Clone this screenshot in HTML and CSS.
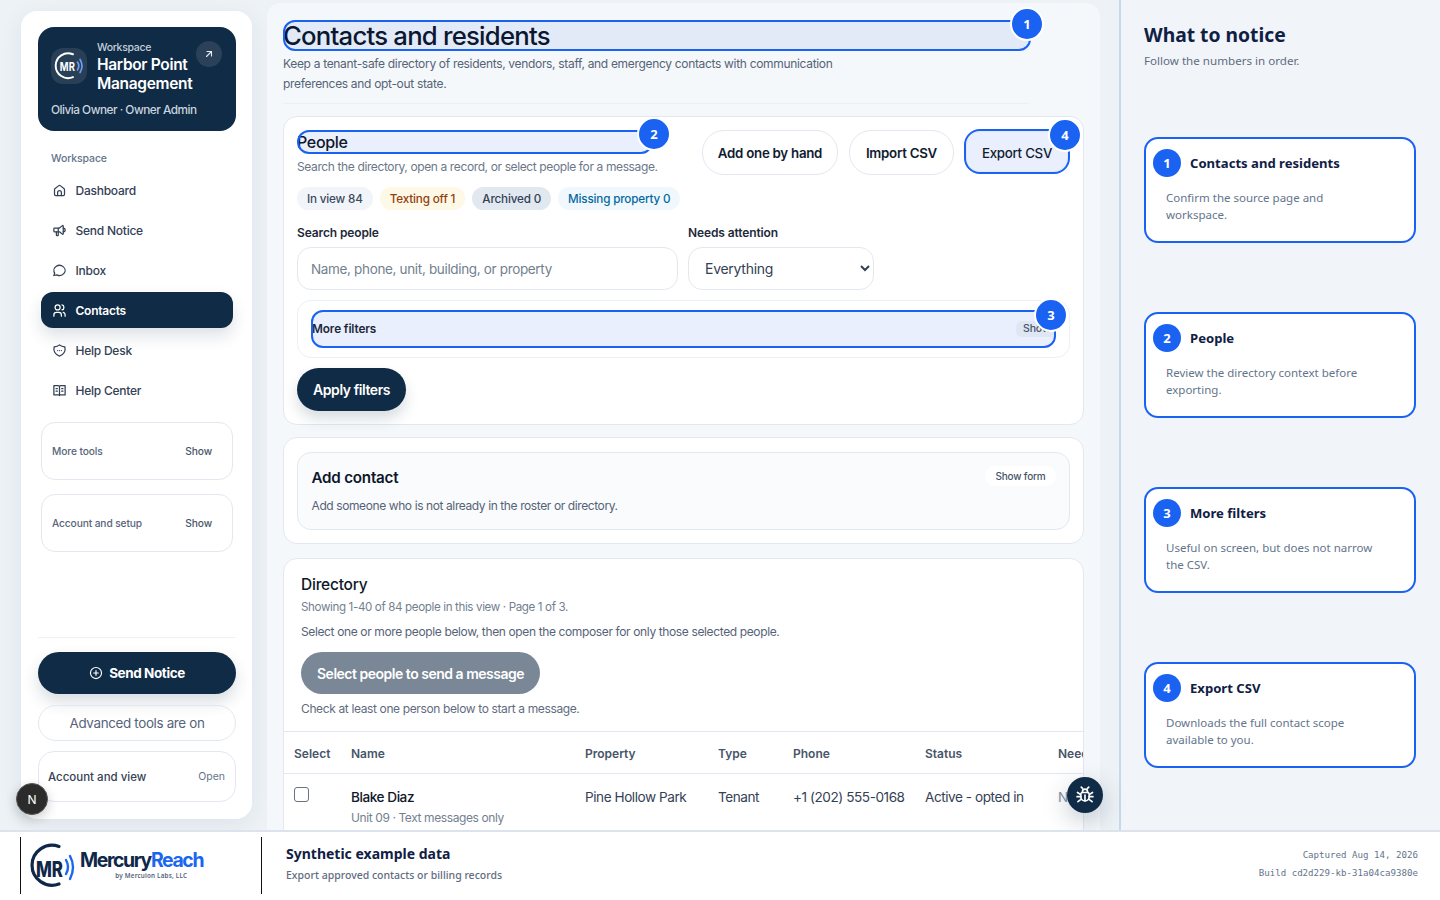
FILE: index.html
```html
<!DOCTYPE html>
<html lang="en">
<head>
  <meta charset="UTF-8" />
  <title>Contacts and residents</title>
  <link rel="stylesheet" href="styles.css">
</head>
<body>
  <div class="app">
    <div class="stage">
      <aside class="sidebar">
        <div class="ws-card">
          <div class="ws-top">
            <div class="ws-logo">
              <svg width="30" height="30" viewBox="0 0 46 46" fill="none">
                <path d="M29 5A19 19 0 1 0 29 40" stroke="#fff" stroke-width="3" stroke-linecap="round"/>
                <text x="9" y="30" class="mark-text" fill="#fff" textLength="23" lengthAdjust="spacingAndGlyphs">MR</text>
                <path d="M36 17Q40 23 36 29M40 13Q46 23 40 33" stroke="#6d9cf2" stroke-width="2.600" stroke-linecap="round"/>
              </svg>
            </div>
            <div class="ws-text">
              <span class="ws-label">Workspace</span>
              <strong class="ws-name">Harbor Point Management</strong>
            </div>
            <span class="ws-open">
              <svg width="12" height="12" viewBox="0 0 24 24" fill="none" stroke="#e6edf3" stroke-width="2.200" stroke-linecap="round" stroke-linejoin="round"><path d="M7 17 17 7M8 7h9v9"/></svg>
            </span>
          </div>
          <p class="ws-user">Olivia Owner · Owner Admin</p>
        </div>

        <p class="nav-label">Workspace</p>
        <nav class="nav">
          <a href="#">
            <svg viewBox="0 0 24 24"><path d="M19 8.700 13.700 4.600a2.700 2.700 0 0 0-3.300 0L5 8.700a2.700 2.700 0 0 0-1 2.100V18a2 2 0 0 0 2 2h12a2 2 0 0 0 2-2v-7.200c0-.8-.4-1.600-1-2.100"/><path d="M9 20v-5a3 3 0 0 1 6 0v5"/></svg>
            Dashboard
          </a>
          <a href="#">
            <svg viewBox="0 0 24 24"><path d="M18 8a3 3 0 0 1 0 6"/><path d="M10 8v11a1 1 0 0 1-1 1H8a1 1 0 0 1-1-1v-5"/><path d="m12 8 4.500-3.800a.9.9 0 0 1 1.500.7v12.200a.9.9 0 0 1-1.500.7L12 14H4a1 1 0 0 1-1-1V9a1 1 0 0 1 1-1z"/></svg>
            Send Notice
          </a>
          <a href="#">
            <svg viewBox="0 0 24 24"><path d="m3 20 1.300-3.900C2 12.700 2.900 8.200 6.400 5.700c3.500-2.500 8.600-2.300 11.800.5 3.300 2.800 3.700 7.300 1 10.500-2.700 3.200-7.600 4.200-11.500 2.300z"/></svg>
            Inbox
          </a>
          <a href="#" class="active">
            <svg viewBox="0 0 24 24"><circle cx="9" cy="7" r="4"/><path d="M3 21v-2a4 4 0 0 1 4-4h4a4 4 0 0 1 4 4v2"/><path d="M16 3.100a4 4 0 0 1 0 7.800M21 21v-2a4 4 0 0 0-3-3.900"/></svg>
            Contacts
          </a>
          <a href="#">
            <svg viewBox="0 0 24 24"><path d="M12 3a12 12 0 0 0 8.500 3A12 12 0 0 1 12 21 12 12 0 0 1 3.500 6 12 12 0 0 0 12 3z"/><path d="M9 12h.01M12 12h.01M15 12h.01"/></svg>
            Help Desk
          </a>
          <a href="#">
            <svg viewBox="0 0 24 24"><path d="M12 6v14M3 4h7a2 2 0 0 1 2 2 2 2 0 0 1 2-2h7v15h-7a2 2 0 0 0-2 1 2 2 0 0 0-2-1H3z"/><path d="M6.500 9h2M6.500 13h2M15.500 9h2M15.500 13h2"/></svg>
            Help Center
          </a>
        </nav>

        <div class="side-box"><span>More tools</span><em>Show</em></div>
        <div class="side-box"><span>Account and setup</span><em>Show</em></div>

        <div class="side-foot">
          <button class="send-btn">
            <svg width="14" height="14" viewBox="0 0 24 24" fill="none" stroke="#fff" stroke-width="2" stroke-linecap="round"><circle cx="12" cy="12" r="9.500"/><path d="M12 8v8M8 12h8"/></svg>
            Send Notice
          </button>
          <div class="adv-pill">Advanced tools are on</div>
          <div class="acct-box"><span>Account and view</span><em>Open</em></div>
        </div>
      </aside>

      <main class="content">
        <header class="page-head">
          <h1 class="tour-mark tour-h1">Contacts and residents<span class="badge">1</span></h1>
          <p>Keep a tenant-safe directory of residents, vendors, staff, and emergency contacts with communication preferences and opt-out state.</p>
        </header>

        <section class="card people">
          <div class="people-top">
            <div class="people-intro">
              <h2 class="tour-mark tour-h2">People<span class="badge">2</span></h2>
              <p>Search the directory, open a record, or select people for a message.</p>
            </div>
            <div class="actions">
              <button class="pill-btn add-btn">Add one by hand</button>
              <button class="pill-btn import-btn">Import CSV</button>
              <button class="pill-btn tour-export">Export CSV<span class="badge">4</span></button>
            </div>
          </div>
          <div class="chips">
            <span class="chip">In view 84</span>
            <span class="chip warn">Texting off 1</span>
            <span class="chip gray">Archived 0</span>
            <span class="chip info">Missing property 0</span>
          </div>
          <div class="filters">
            <label class="field wide">
              <span>Search people</span>
              <input type="text" placeholder="Name, phone, unit, building, or property">
            </label>
            <label class="field narrow">
              <span>Needs attention</span>
              <select><option>Everything</option></select>
            </label>
          </div>
          <div class="more-wrap">
            <div class="tour-mark more-filters">More filters<em>Show</em><span class="badge">3</span></div>
          </div>
          <button class="apply-btn">Apply filters</button>
        </section>

        <section class="card add-card">
          <div class="add-inner">
            <div>
              <h3>Add contact</h3>
              <p>Add someone who is not already in the roster or directory.</p>
            </div>
            <em>Show form</em>
          </div>
        </section>

        <section class="card directory">
          <div class="dir-head">
            <h3>Directory</h3>
            <p class="dir-count">Showing 1-40 of 84 people in this view · Page 1 of 3.</p>
            <p class="dir-help">Select one or more people below, then open the composer for only those selected people.</p>
            <button class="msg-btn">Select people to send a message</button>
            <p class="dir-hint">Check at least one person below to start a message.</p>
          </div>
          <table class="dir-table">
            <thead>
              <tr><th class="c-sel">Select</th><th class="c-name">Name</th><th class="c-prop">Property</th><th class="c-type">Type</th><th class="c-phone">Phone</th><th class="c-status">Status</th><th>Needs attention</th></tr>
            </thead>
            <tbody>
              <tr>
                <td><span class="check"></span></td>
                <td><strong>Blake Diaz</strong><small>Unit 09 · Text messages only</small></td>
                <td>Pine Hollow Park</td>
                <td>Tenant</td>
                <td>+1 (202) 555-0168</td>
                <td>Active - opted in</td>
                <td class="muted">None</td>
              </tr>
            </tbody>
          </table>
        </section>
      </main>

      <aside class="notes">
        <h2>What to notice</h2>
        <p class="notes-sub">Follow the numbers in order.</p>
        <ol class="note-list">
          <li><div class="note-title"><span>1</span>Contacts and residents</div><p>Confirm the source page and workspace.</p></li>
          <li><div class="note-title"><span>2</span>People</div><p>Review the directory context before exporting.</p></li>
          <li><div class="note-title"><span>3</span>More filters</div><p>Useful on screen, but does not narrow the CSV.</p></li>
          <li><div class="note-title"><span>4</span>Export CSV</div><p>Downloads the full contact scope available to you.</p></li>
        </ol>
      </aside>

      <span class="float-n">N</span>
      <span class="float-bug">
        <svg width="20" height="20" viewBox="0 0 24 24" fill="none" stroke="#fff" stroke-width="2" stroke-linecap="round" stroke-linejoin="round"><path d="M9 9V8a3 3 0 0 1 6 0v1"/><path d="M8 9h8a3 3 0 0 1 1 2v3a5 5 0 0 1-10 0v-3a3 3 0 0 1 1-2z"/><path d="M3 9l3 2M21 9l-3 2M2.500 14H7M21.500 14H17M3.500 20l4-3M20.500 20l-4-3M12 12v7M9 4 7.500 2.500M15 4l1.500-1.500"/></svg>
      </span>
    </div>

    <footer class="foot">
      <div class="foot-logo">
        <svg width="46" height="46" viewBox="0 0 46 46" fill="none">
          <path d="M29 3.500A20 20 0 1 0 29 41" stroke="#0f2748" stroke-width="3.200" stroke-linecap="round"/>
          <text x="6" y="33.500" class="foot-mark" fill="#0f2748" textLength="27" lengthAdjust="spacingAndGlyphs">MR</text>
          <path d="M36 17Q40 24 36 31" stroke="#1a66f0" stroke-width="2.400" stroke-linecap="round"/>
          <path d="M40 13Q46 24 40 36" stroke="#1a66f0" stroke-width="2.400" stroke-linecap="round"/>
        </svg>
        <div class="word">
          <div class="wordmark">Mercury<b>Reach</b></div>
          <div class="byline">by Mercuion Labs, LLC</div>
        </div>
      </div>
      <div class="foot-text">
        <strong>Synthetic example data</strong>
        <span>Export approved contacts or billing records</span>
      </div>
      <div class="foot-meta">
        <span>Captured Aug 14, 2026</span>
        <span>Build cd2d229-kb-31a04ca9380e</span>
      </div>
    </footer>
  </div>
</body>
</html>
```

FILE: styles.css
```css
:root {
  --navy: #0f2b46;
  --blue: #1a62f2;
  --line: #e3e8f0;
  --ink: #0f172a;
  --slate: #334155;
  --muted: #64748b;
}

* {
  box-sizing: border-box;
}

html, body {
  margin: 0;
  height: 100%;
  overflow: hidden;
}

body {
  font-family: Inter, 'Noto Sans', sans-serif;
  color: var(--ink);
  background: #edf2f6;
}

p, h1, h2, h3, ol {
  margin: 0;
  padding: 0;
}

em {
  font-style: normal;
}

button {
  font-family: inherit;
  border: none;
}

.app {
  height: 900px;
  display: flex;
  flex-direction: column;
}

.stage {
  position: relative;
  height: 830px;
  display: flex;
  overflow: hidden;
  padding-left: 21px;
}

/* Sidebar */
.sidebar {
  width: 231px;
  height: 808px;
  margin-top: 11px;
  flex-shrink: 0;
  background: #fff;
  border-radius: 16px;
  padding: 16px 16px 17px 17px;
  display: flex;
  flex-direction: column;
  box-shadow: 0 6px 24px rgba(15, 43, 70, 0.07);
}

.ws-card {
  height: 104px;
  background: var(--navy);
  border-radius: 16px;
  padding: 13px 14px 0 13px;
  color: #fff;
}

.ws-top {
  display: flex;
  align-items: flex-start;
}

.ws-logo {
  width: 36px;
  height: 36px;
  margin-top: 8px;
  margin-right: 10px;
  flex-shrink: 0;
  border-radius: 12px;
  background: #293f56;
  display: flex;
  align-items: center;
  justify-content: center;
}

.mark-text {
  font: 700 18px Inter, sans-serif;
}

.ws-text {
  width: 100px;
  flex-shrink: 0;
  letter-spacing: -0.02em;
}

.ws-label {
  display: block;
  margin-top: 1px;
  font-size: 10.500px;
  line-height: 14px;
  font-weight: 500;
  color: #c3ced9;
}

.ws-name {
  display: block;
  font-size: 15.500px;
  line-height: 19px;
  font-weight: 600;
}

.ws-open {
  width: 26px;
  height: 26px;
  margin: 1px 0 0 -1px;
  flex-shrink: 0;
  border-radius: 50%;
  background: #2b4159;
  display: flex;
  align-items: center;
  justify-content: center;
}

.ws-user {
  margin-top: 9px;
  font-size: 11.800px;
  line-height: 16px;
  font-weight: 500;
  letter-spacing: -0.5px;
  color: #c9d4de;
}

.nav-label {
  margin: 21px 0 0 13px;
  font-size: 10.500px;
  line-height: 14px;
  font-weight: 500;
  letter-spacing: -0.01em;
  color: #64748b;
}

.nav {
  margin: 6px 0 0 3px;
  width: 192px;
  display: flex;
  flex-direction: column;
  gap: 4px;
}

.nav a {
  height: 36px;
  padding-left: 11px;
  display: flex;
  align-items: center;
  gap: 8.500px;
  border-radius: 12px;
  text-decoration: none;
  font-size: 12px;
  font-weight: 500;
  letter-spacing: -0.02em;
  color: var(--slate);
}

.nav svg {
  width: 15px;
  height: 15px;
  fill: none;
  stroke: currentColor;
  stroke-width: 2;
  stroke-linecap: round;
  stroke-linejoin: round;
}

.nav a.active {
  background: var(--navy);
  color: #fff;
  font-weight: 600;
  box-shadow: 0 8px 16px rgba(15, 43, 70, 0.14);
}

.side-box {
  width: 192px;
  height: 58px;
  margin: 14px 0 0 3px;
  padding: 0 10px;
  display: flex;
  align-items: center;
  justify-content: space-between;
  background: #fff;
  border: 1px solid var(--line);
  border-radius: 14px;
  font-size: 10.200px;
  font-weight: 500;
  letter-spacing: -0.01em;
  color: #56657a;
}

.side-box em {
  padding: 3px 10px;
  color: #475569;
}

.side-foot {
  margin-top: auto;
  padding-top: 14px;
  border-top: 1px solid #eef1f5;
}

.send-btn {
  width: 198px;
  height: 42px;
  display: flex;
  align-items: center;
  justify-content: center;
  gap: 6px;
  background: var(--navy);
  color: #fff;
  border-radius: 21px;
  font-size: 13.500px;
  font-weight: 700;
  letter-spacing: -0.03em;
  box-shadow: 0 8px 16px rgba(15, 43, 70, 0.16);
}

.adv-pill {
  height: 36px;
  margin-top: 11px;
  border: 1px solid var(--line);
  border-radius: 18px;
  display: flex;
  align-items: center;
  justify-content: center;
  font-size: 13.400px;
  letter-spacing: -0.025em;
  color: #55647a;
}

.acct-box {
  height: 51px;
  margin-top: 10px;
  padding: 0 10px 0 9px;
  border: 1px solid var(--line);
  border-radius: 16px;
  display: flex;
  align-items: center;
  justify-content: space-between;
  font-size: 11.500px;
  font-weight: 500;
  color: #334155;
}

.acct-box em {
  font-size: 10.500px;
  font-weight: 400;
  color: #64748b;
}

/* Main panel */
.content {
  width: 833px;
  margin: 3px 0 0 15px;
  flex-shrink: 0;
  padding: 17px 16px 0;
  background: #f5f8fa;
  border-radius: 14px 14px 0 0;
}

.page-head {
  width: 746px;
  height: 84px;
  border-bottom: 1px solid #eceff3;
}

.page-head p {
  width: 560px;
  margin-top: 3px;
  font-size: 12px;
  line-height: 20px;
  letter-spacing: -0.32px;
  color: #566377;
}

/* drawn inside the box, so the text runs over the left edge */
.tour-mark {
  position: relative;
  border-radius: 12px;
  outline: 2px solid var(--blue);
  outline-offset: -2px;
}

.tour-h1 {
  width: 748px;
  height: 31px;
  background: #e1eaf6;
  font-size: 25.700px;
  line-height: 31px;
  font-weight: 500;
  letter-spacing: -0.03em;
  color: #0b1730;
}

.badge {
  position: absolute;
  width: 34px;
  height: 34px;
  border: 2px solid #fff;
  border-radius: 50%;
  background: var(--blue);
  display: flex;
  align-items: center;
  justify-content: center;
  font: 700 13px 'Noto Sans', sans-serif;
  letter-spacing: 0;
  color: #fff;
}

.tour-h1 .badge {
  right: -13px;
  top: -13px;
}

.card {
  background: #fff;
  border: 1px solid var(--line);
  border-radius: 14px;
}

.people {
  height: 309px;
  margin-top: 12px;
  padding: 13px 13px 0;
}

.people-top {
  display: flex;
  justify-content: space-between;
}

.people-intro {
  width: 356px;
}

.tour-h2 {
  height: 24px;
  background: #e9effc;
  font-size: 16px;
  line-height: 24px;
  font-weight: 500;
  letter-spacing: -0.02em;
}

.tour-h2 .badge {
  right: -18px;
  top: -13px;
}

.people-intro p {
  margin-top: 4px;
  font-size: 12px;
  line-height: 18px;
  letter-spacing: -0.38px;
  white-space: nowrap;
  color: #6b7789;
}

.actions {
  display: flex;
  gap: 11px;
}

.pill-btn {
  position: relative;
  height: 45px;
  padding: 0;
  background: #fff;
  border: 1px solid var(--line);
  border-radius: 22px;
  font-size: 13.300px;
  font-weight: 600;
  letter-spacing: -0.02em;
  color: #111c30;
}

.add-btn {
  width: 136px;
}

.import-btn {
  width: 105px;
}

.tour-export {
  width: 102px;
  height: 41px;
  margin: 1px 2px 0 1px;
  padding: 2px 0 0;
  background: #e9effc;
  border-radius: 14px;
  outline: 2px solid var(--blue);
  font-weight: 500;
}

.tour-export .badge {
  right: -15px;
  top: -14px;
}

.chips {
  margin-top: 11px;
  display: flex;
  gap: 7px;
}

.chip {
  height: 23px;
  padding: 0 10px;
  display: flex;
  align-items: center;
  border-radius: 12px;
  background: #f1f5f9;
  font-size: 11.700px;
  font-weight: 500;
  letter-spacing: -0.015em;
  color: #3b485c;
}

.chip.warn {
  background: #fef8e7;
  color: #92400e;
}

.chip.gray {
  background: #e2e8f0;
  color: #334155;
}

.chip.info {
  background: #f0f8fe;
  color: #0369a1;
}

.filters {
  margin-top: 15px;
  display: flex;
  gap: 10px;
}

.field span {
  display: block;
  margin-bottom: 6px;
  font-size: 12px;
  line-height: 16px;
  font-weight: 600;
  letter-spacing: -0.01em;
  color: #1e293b;
}

.field input,
.field select {
  display: block;
  width: 100%;
  height: 43px;
  background: #fff;
  border: 1px solid var(--line);
  border-radius: 14px;
  font-family: inherit;
  font-size: 14px;
  letter-spacing: -0.02em;
  color: #334155;
}

.field input {
  padding: 0 13px;
  font-size: 13.500px;
  letter-spacing: -0.34px;
}

.field select {
  padding: 0 12px;
}

.field input::placeholder {
  color: #737f90;
}

.wide {
  width: 381px;
}

.narrow {
  width: 186px;
}

.more-wrap {
  height: 58px;
  margin-top: 10px;
  padding: 9px 13px 0;
  border: 1px solid #edf0f5;
  border-radius: 14px;
}

.more-filters {
  height: 38px;
  display: flex;
  align-items: center;
  justify-content: space-between;
  padding-left: 1px;
  background: #e9effc;
  font-size: 11.800px;
  font-weight: 600;
  letter-spacing: -0.01em;
  color: #1e293b;
}

.more-filters em {
  width: 40px;
  height: 16px;
  padding: 0 7px;
  border-radius: 6px 0 0 6px;
  background: #dfe6f4;
  font-size: 10.500px;
  line-height: 16px;
  font-weight: 500;
  overflow: hidden;
  color: #475569;
}

.more-filters .badge {
  right: -12px;
  top: -12px;
}

.apply-btn {
  height: 43px;
  margin-top: 10px;
  padding: 0 16px;
  background: var(--navy);
  color: #fff;
  border-radius: 22px;
  font-size: 14px;
  font-weight: 600;
  letter-spacing: -0.03em;
  box-shadow: 0 8px 14px rgba(15, 43, 70, 0.16);
}

.add-card {
  height: 107px;
  margin-top: 12px;
  padding: 14px 13px 0;
}

.add-inner {
  height: 78px;
  padding: 14px 13px 0 13.500px;
  display: flex;
  justify-content: space-between;
  background: #fafbfd;
  border: 1px solid var(--line);
  border-radius: 14px;
}

.add-inner h3 {
  font-size: 15.200px;
  line-height: 22px;
  font-weight: 600;
  letter-spacing: -0.015em;
}

.add-inner p {
  margin-top: 9px;
  font-size: 12px;
  line-height: 16px;
  letter-spacing: -0.4px;
  color: #566377;
}

.add-inner em {
  width: 71px;
  height: 20px;
  margin-top: -1px;
  text-align: center;
  line-height: 20px;
  border-radius: 10px;
  background: #fff;
  font-size: 10px;
  font-weight: 500;
  letter-spacing: -0.02em;
  color: #475569;
}

.directory {
  height: 300px;
  margin-top: 14px;
  overflow: hidden;
}

.dir-head {
  padding: 15px 17px 0;
}

.dir-head h3 {
  font-size: 15.500px;
  line-height: 22px;
  font-weight: 500;
  letter-spacing: -0.015em;
}

.dir-count,
.dir-help,
.dir-hint {
  font-size: 12px;
  line-height: 16px;
  letter-spacing: -0.37px;
}

.dir-count {
  margin-top: 3px;
  font-size: 11.600px;
  color: #737f90;
}

.dir-help {
  margin-top: 9px;
  color: #566377;
}

.msg-btn {
  display: block;
  height: 42px;
  margin-top: 12px;
  padding: 0 16px;
  background: #7a8796;
  color: #fff;
  border-radius: 21px;
  font-size: 14px;
  font-weight: 600;
  letter-spacing: -0.035em;
}

.dir-hint {
  margin-top: 7px;
  color: #5f6c7f;
}

.dir-table {
  width: 900px;
  margin-top: 14px;
  border-collapse: collapse;
  table-layout: fixed;
  border-top: 1px solid var(--line);
}

.dir-table th {
  height: 42px;
  padding: 1px 0 0;
  text-align: left;
  font-size: 12px;
  font-weight: 600;
  white-space: nowrap;
  color: #475569;
  border-bottom: 1px solid var(--line);
}

.dir-table td {
  padding: 13px 0 0;
  vertical-align: top;
  font-size: 13.600px;
  line-height: 20px;
  letter-spacing: -0.45px;
  white-space: nowrap;
  color: #334155;
}

.dir-table th:first-child,
.dir-table td:first-child {
  padding-left: 10px;
}

.dir-table strong {
  display: block;
  font-weight: 500;
  color: var(--ink);
}

.dir-table small {
  display: block;
  margin-top: 2px;
  font-size: 12px;
  line-height: 18px;
  letter-spacing: -0.4px;
  color: #737f90;
}

.c-sel { width: 67px; }
.c-name { width: 234px; }
.c-prop { width: 133px; }
.c-type { width: 75px; }
.c-phone { width: 132px; }
.c-status { width: 133px; }

.muted {
  color: #8391a3 !important;
}

.check {
  display: block;
  width: 15px;
  height: 15px;
  border: 1px solid #6b7280;
  border-radius: 3px;
  background: #fff;
}

/* Right column */
.notes {
  width: 321px;
  margin-left: 19px;
  flex-shrink: 0;
  padding: 21px 24px 0 23px;
  background: #f1f5fa;
  border-left: 2px solid #c9d8e8;
  font-family: 'Noto Sans', sans-serif;
}

.notes h2 {
  font-size: 19.300px;
  line-height: 27px;
  font-weight: 700;
  color: #0f2044;
}

.notes-sub {
  margin-top: 5px;
  font-size: 11.600px;
  line-height: 16px;
  color: #5f6c80;
}

.note-list {
  margin-top: 68px;
  list-style: none;
  display: flex;
  flex-direction: column;
  gap: 69px;
}

.note-list li {
  height: 106px;
  padding: 10px 12px 0 7px;
  background: #fff;
  border: 2px solid var(--blue);
  border-radius: 14px;
}

.note-title {
  display: flex;
  align-items: center;
  gap: 9px;
  font-size: 13.100px;
  font-weight: 700;
  color: #0f2044;
}

.note-title span {
  width: 28px;
  height: 28px;
  border-radius: 50%;
  background: var(--blue);
  display: flex;
  align-items: center;
  justify-content: center;
  font-size: 13px;
  color: #fff;
}

.note-list p {
  max-width: 215px;
  margin: 12px 0 0 13px;
  font-size: 11.500px;
  line-height: 17px;
  color: #64748b;
}

/* Floating buttons */
.float-n {
  position: absolute;
  left: 16px;
  top: 783px;
  width: 32px;
  height: 32px;
  border: 1px solid #555;
  border-radius: 50%;
  background: #2b2b2b;
  display: flex;
  align-items: center;
  justify-content: center;
  font-size: 12px;
  color: #fff;
  box-shadow: 0 4px 12px rgba(0, 0, 0, 0.2);
}

.float-bug {
  position: absolute;
  left: 1067px;
  top: 777px;
  width: 36px;
  height: 36px;
  border-radius: 50%;
  background: var(--navy);
  display: flex;
  align-items: center;
  justify-content: center;
  box-shadow: 0 8px 24px rgba(15, 43, 70, 0.25);
}

/* Footer */
.foot {
  height: 70px;
  padding: 5px 22px 6px 20px;
  display: flex;
  background: #fff;
  border-top: 2px solid #dce3ec;
  font-family: 'Noto Sans', sans-serif;
}

.foot-logo {
  width: 242px;
  padding-left: 9px;
  display: flex;
  align-items: center;
  gap: 4px;
  border-left: 1px solid #111;
  border-right: 1px solid #111;
}

.foot-mark {
  font: 800 21px Inter, sans-serif;
}

.wordmark {
  margin-top: -2px;
  font: 700 19.400px/22px Inter, sans-serif;
  letter-spacing: -0.07em;
  color: #0f2748;
}

.wordmark b {
  color: #1a66f0;
  font-weight: 700;
}

.byline {
  margin-top: 1px;
  text-align: right;
  padding-right: 16px;
  font-size: 6.300px;
  line-height: 8px;
  font-weight: 600;
  letter-spacing: 0.03em;
  color: #55647a;
}

.foot-text {
  margin-left: 24px;
  padding-top: 7px;
  display: flex;
  flex-direction: column;
}

.foot-text strong {
  font-size: 14px;
  line-height: 20px;
  font-weight: 700;
  color: #0f2044;
}

.foot-text span {
  margin-top: 3px;
  font-size: 10.500px;
  line-height: 16px;
  font-weight: 500;
  color: #5f6c80;
}

.foot-meta {
  margin-left: auto;
  padding-top: 11px;
  display: flex;
  flex-direction: column;
  align-items: flex-end;
  gap: 4px;
  font-family: 'DejaVu Sans Mono', monospace;
  font-size: 9.150px;
  line-height: 14px;
  color: #64748b;
}
```
